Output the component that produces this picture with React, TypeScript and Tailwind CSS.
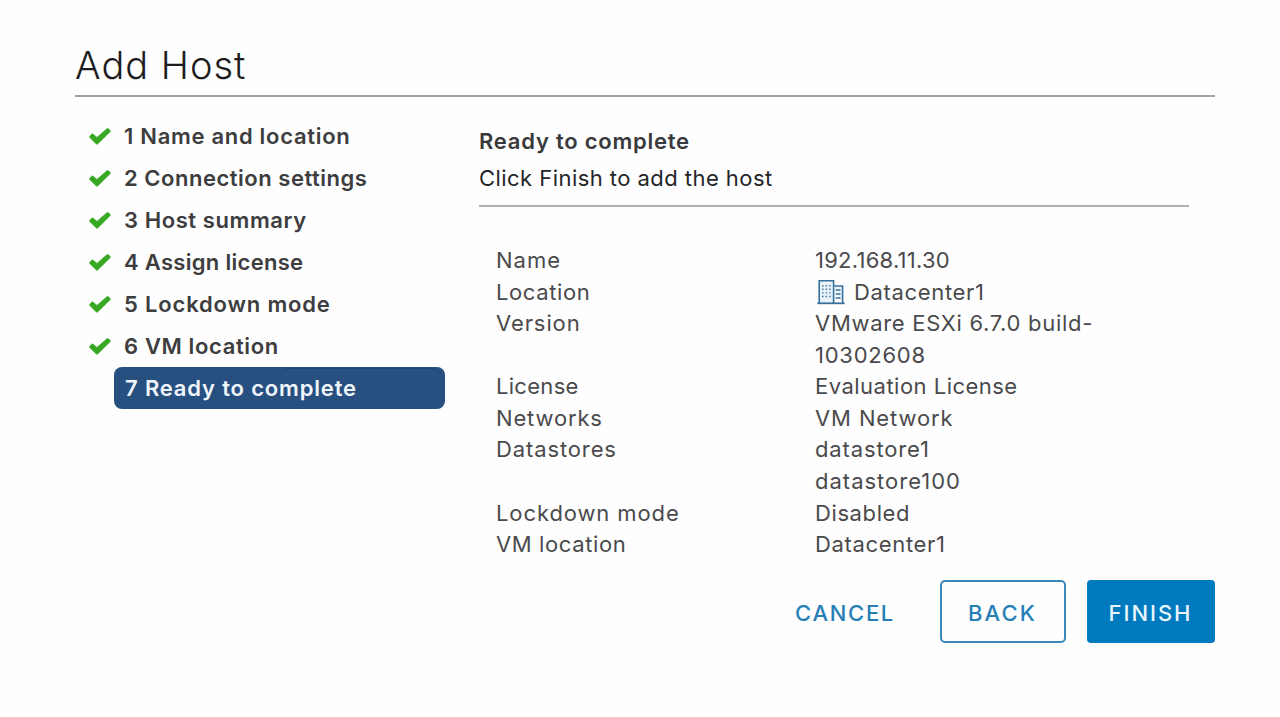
type Step = { label: string; tracking: string };
type Row = { label: string; labelTracking: string; values: { text: string; tracking: string; icon?: boolean }[] };

const doneSteps: Step[] = [
  { label: "1 Name and location", tracking: "tracking-[0.7px]" },
  { label: "2 Connection settings", tracking: "tracking-[0.52px]" },
  { label: "3 Host summary", tracking: "tracking-[0.58px]" },
  { label: "4 Assign license", tracking: "tracking-[0.3px]" },
  { label: "5 Lockdown mode", tracking: "tracking-[0.83px]" },
  { label: "6 VM location", tracking: "tracking-[0.63px]" },
];

const rows: Row[] = [
  { label: "Name", labelTracking: "tracking-[1px]", values: [{ text: "192.168.11.30", tracking: "tracking-[0.25px]" }] },
  { label: "Location", labelTracking: "tracking-[0.6px]", values: [{ text: "Datacenter1", tracking: "tracking-[0.67px]", icon: true }] },
  {
    label: "Version",
    labelTracking: "tracking-[0.9px]",
    values: [
      { text: "VMware ESXi 6.7.0 build-", tracking: "tracking-[0.7px]" },
      { text: "10302608", tracking: "tracking-[0.75px]" },
    ],
  },
  { label: "License", labelTracking: "tracking-[0.3px]", values: [{ text: "Evaluation License", tracking: "tracking-[0.48px]" }] },
  { label: "Networks", labelTracking: "tracking-[0.85px]", values: [{ text: "VM Network", tracking: "tracking-[0.88px]" }] },
  {
    label: "Datastores",
    labelTracking: "tracking-[0.88px]",
    values: [
      { text: "datastore1", tracking: "tracking-[0.86px]" },
      { text: "datastore100", tracking: "tracking-[1px]" },
    ],
  },
  { label: "Lockdown mode", labelTracking: "tracking-[0.9px]", values: [{ text: "Disabled", tracking: "tracking-[0.6px]" }] },
  { label: "VM location", labelTracking: "tracking-[0.62px]", values: [{ text: "Datacenter1", tracking: "tracking-[0.67px]" }] },
];

function CheckIcon() {
  return (
    <svg className="h-[17px] w-[22px] shrink-0" viewBox="0 0 22 17">
      <path d="M0.8 8.2 L3.4 5.8 L8 9.4 L18 0.7 H19.2 L21.2 2.6 V3.6 L8.6 16 H7.4 L0.8 9.6 Z" fill="#37a822" stroke="#37a822" strokeWidth="0.8" strokeLinejoin="round" />
    </svg>
  );
}

function DatacenterIcon() {
  return (
    <svg className="mr-[9px] ml-0.5 h-[26px] w-7 shrink-0" viewBox="0 0 28 26" fill="none" stroke="#38719c" strokeWidth="1.6">
      <path d="M2.2 24V1.8H16.6V24" fill="#e9f2f9" />
      <path d="M16.6 7H25.6V24" fill="#e9f2f9" />
      <path d="M0.3 24.3H27.7" strokeWidth="1.8" />
      <path d="M5.8 6v13M9.4 6v13M13 6v13" strokeWidth="1.4" strokeDasharray="1.4 2.2" />
      <path d="M18.7 11h4.8M18.7 15h4.8M18.7 19h4.8" strokeWidth="1.3" />
    </svg>
  );
}

export default function App() {
  return (
    <main className="h-[717px] w-[1280px] overflow-hidden bg-[#fefefe] pt-[42px] pl-[75px] font-['Inter',sans-serif] text-[22px] text-[#4a4a4c]">
      <header className="h-[55px] w-[1140px] border-b-2 border-[#a3a29e]">
        <h1 className="text-[38px] leading-[46px] font-light tracking-[1px] text-[#1d1d20]">Add Host</h1>
      </header>

      <div className="flex h-[465px] w-[1140px]">
        <nav className="w-[404px] pt-[18px]">
          <ol>
            {doneSteps.map((s) => (
              <li key={s.label} className="flex h-[42px] items-center gap-[13px] pl-[14px]">
                <CheckIcon />
                <span className={`font-semibold whitespace-nowrap text-[#3d3d40] ${s.tracking}`}>{s.label}</span>
              </li>
            ))}
            <li className="relative ml-[39px] flex h-[42px] w-[331px] items-center rounded-lg bg-[#275080] pl-[11px] font-semibold tracking-[0.83px] whitespace-nowrap text-[#eff5fb]">
              <span className="absolute top-px right-[10px] w-[150px] border-t-[1.5px] border-dotted border-[#1b3a60]" />
              7 Ready to complete
            </li>
          </ol>
        </nav>

        <section className="w-[710px] pt-[26px]">
          <h2 className="leading-9 font-semibold tracking-[0.76px] text-[#39393c]">Ready to complete</h2>
          <div className="h-[48px] border-b-2 border-[#b2b1a9]">
            <p className="leading-[38px] tracking-[0.45px] text-[#252528]">Click Finish to add the host</p>
          </div>
          <dl className="pt-[38.1px] pl-[17px]">
            {rows.map((r) => (
              <div key={r.label} className="flex leading-[31.56px]">
                <dt className={`w-[319px] shrink-0 ${r.labelTracking}`}>{r.label}</dt>
                <dd>
                  {r.values.map((v) => (
                    <div key={v.text} className="flex h-[31.56px] items-center">
                      {v.icon && <DatacenterIcon />}
                      <span className={`whitespace-nowrap ${v.tracking}`}>{v.text}</span>
                    </div>
                  ))}
                </dd>
              </div>
            ))}
          </dl>
        </section>
      </div>

      <footer className="flex w-[1140px] items-center justify-end pt-[18.4px] font-medium text-[#277fb8]">
        <button className="mr-[45px] pt-[3px] tracking-[1.7px]">CANCEL</button>
        <button className="mr-[21px] h-[63px] w-[126px] rounded-[5px] border-2 border-[#3c88ba] pt-[3px] pr-px tracking-[2.1px]">BACK</button>
        <button className="h-[63px] w-[128px] rounded bg-[#007abe] pt-[3px] pr-px tracking-[1.95px] text-[#e8f5fd]">FINISH</button>
      </footer>
    </main>
  );
}
